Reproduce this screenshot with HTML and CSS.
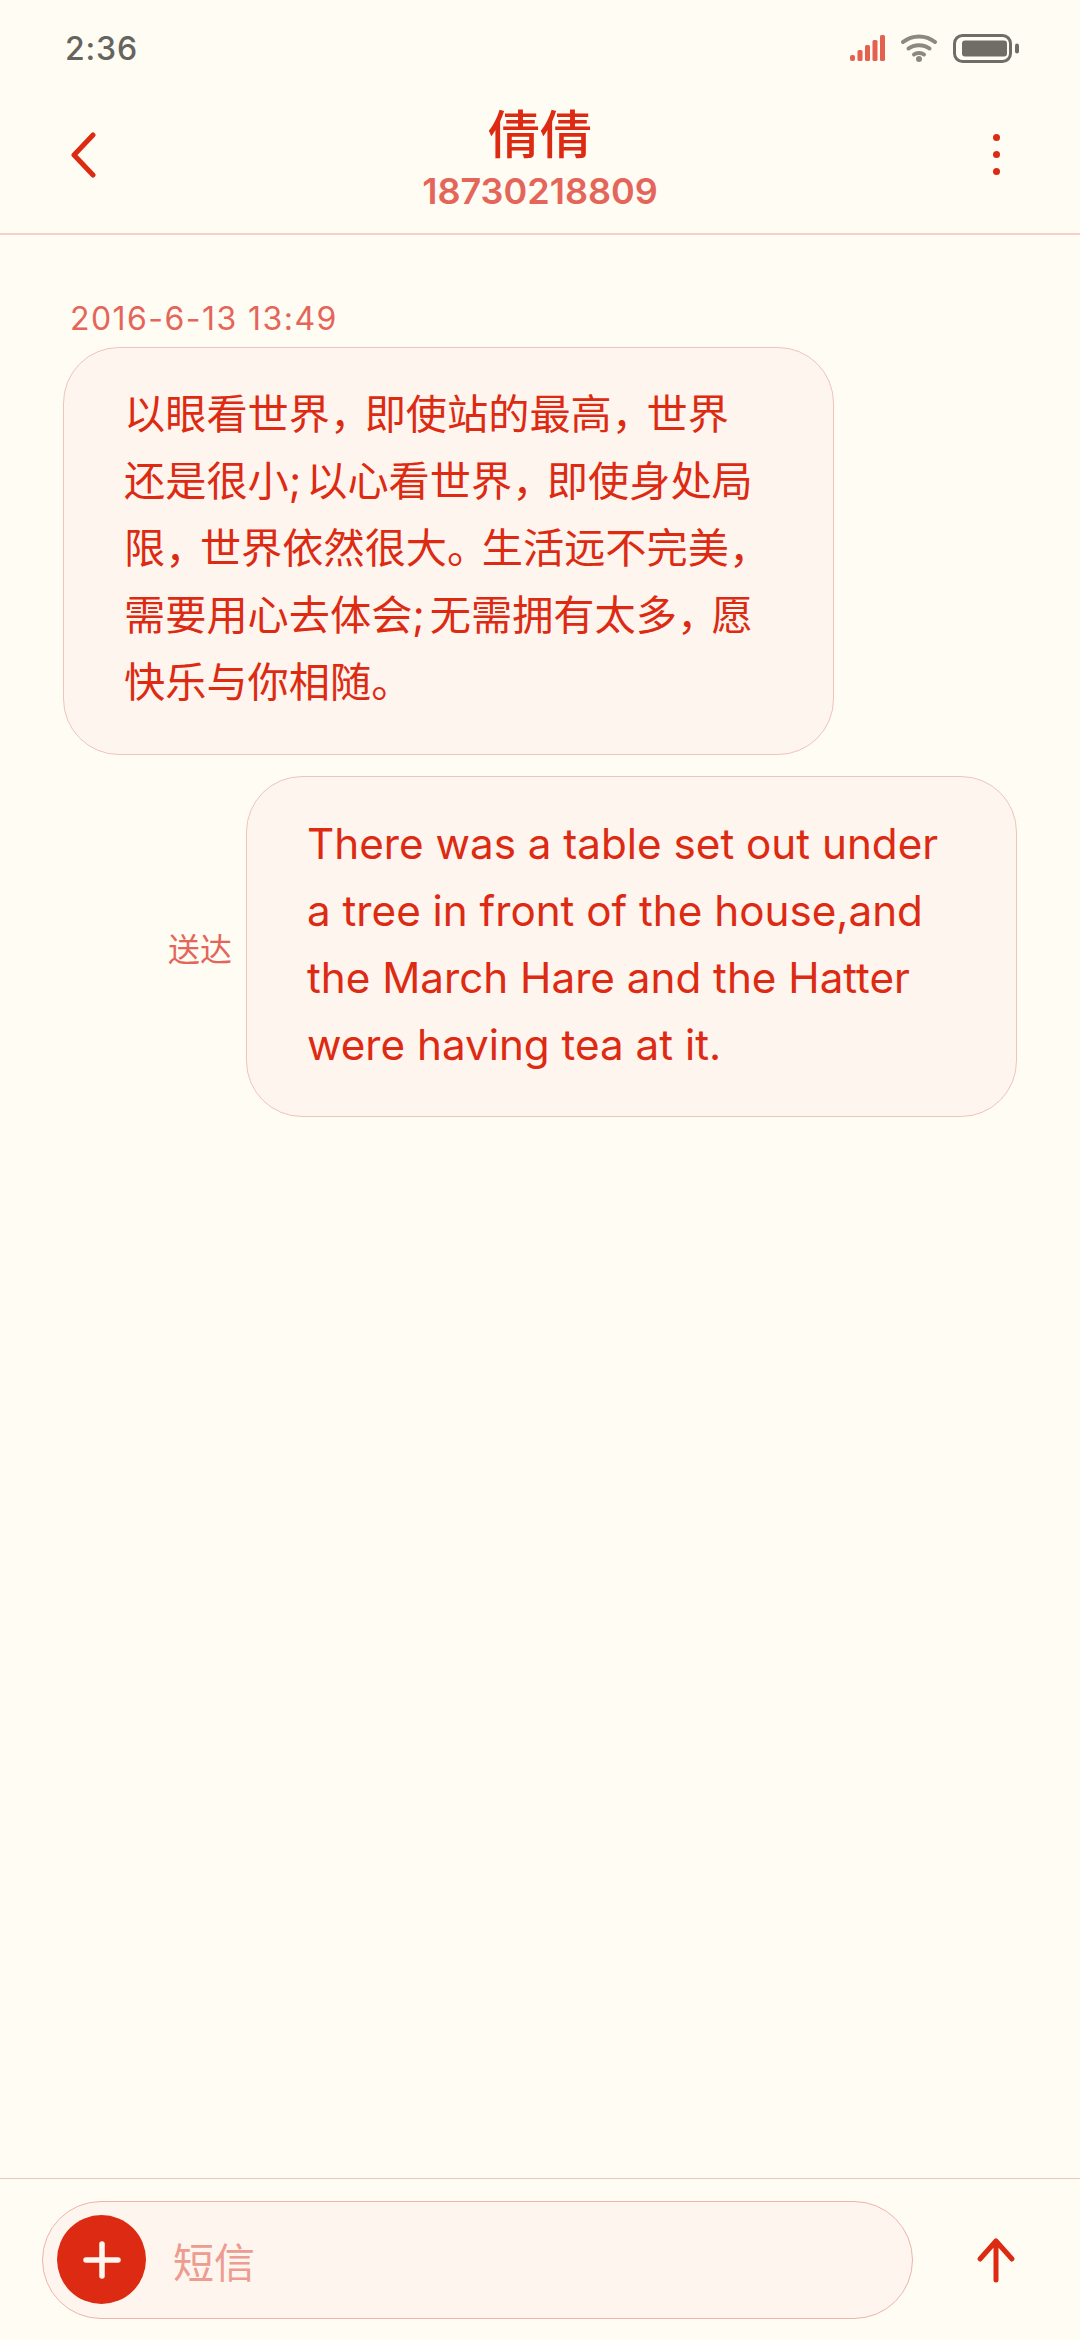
FILE: index.html
```html
<!DOCTYPE html>
<html lang="zh-CN">

<head>
    <meta charset="UTF-8">
    <meta name="viewport" content="width=device-width, initial-scale=1.0">
    <title>倩倩</title>
    <link rel="stylesheet" href="styles.css">
</head>

<body>
    <div class="screen">
        <div class="status-bar">
            <span class="time">2:36</span>
            <div class="status-icons">
                <svg class="icon-signal" width="35" height="26" viewBox="0 0 35 26">
                    <g fill="#e4604f">
                        <rect x="0" y="20" width="5" height="6" rx="2" />
                        <rect x="7.500" y="15" width="5" height="11" rx="1.500" />
                        <rect x="15" y="10" width="5" height="16" rx="1.500" />
                        <rect x="22.500" y="5" width="5" height="21" rx="1.500" />
                        <rect x="30" y="0" width="5" height="26" rx="1.500" />
                    </g>
                </svg>
                <svg class="icon-wifi" width="36" height="28" viewBox="0 0 36 28">
                    <g fill="none" stroke="#8a8a80" stroke-width="4" stroke-linecap="round">
                        <path d="M2 8C11 0.500 25 0.500 34 8" />
                        <path d="M7.500 14.500C13 10 23 10 28.500 14.500" />
                        <path d="M13 20.500C15.500 18.500 20.500 18.500 23 20.500" />
                    </g>
                    <circle cx="18" cy="25" r="3" fill="#8a8a80" />
                </svg>
                <svg class="icon-battery" width="66" height="29" viewBox="0 0 66 29">
                    <rect x="1.500" y="1.500" width="56" height="26" rx="8" fill="none" stroke="#6f6d66" stroke-width="3" />
                    <rect x="9" y="6.500" width="45" height="16" rx="3" fill="#6f6d66" />
                    <rect x="62" y="9.500" width="4" height="10" rx="2" fill="#6f6d66" />
                </svg>
            </div>
        </div>

        <header class="title-bar">
            <svg class="icon-back" width="26" height="46" viewBox="0 0 26 46">
                <path d="M23 3L4 23l19 20" fill="none" stroke="#dd2a12" stroke-width="5" stroke-linecap="round" stroke-linejoin="round" />
            </svg>
            <div class="title-text">
                <div class="contact-name">倩倩</div>
                <div class="contact-number">18730218809</div>
            </div>
            <div class="more">
                <span class="dot"></span>
                <span class="dot"></span>
                <span class="dot"></span>
            </div>
        </header>

        <main class="messages">
            <div class="timestamp">2016-6-13 13:49</div>
            <div class="bubble bubble-zh">以眼看世界<span class="punct">，</span>即使站的最高<span class="punct">，</span>世界<br>还是很小<span class="semi">;</span>以心看世界<span class="punct">，</span>即使身处局<br>限<span class="punct">，</span>世界依然很大<span class="punct">。</span>生活远不完美<span class="punct">，</span><br>需要用心去体会<span class="semi">;</span>无需拥有太多<span class="punct">，</span>愿<br>快乐与你相随<span class="punct">。</span></div>
            <div class="sent-row">
                <span class="delivered">送达</span>
                <div class="bubble bubble-en">There was a table set out under<br>a tree in front of the house,and<br>the March Hare and the Hatter<br>were having tea at it.</div>
            </div>
        </main>

        <footer class="composer">
            <div class="input-pill">
                <div class="add-btn">
                    <svg width="40" height="40" viewBox="0 0 40 40">
                        <path d="M20 4v32M4 20h32" stroke="#fff6f0" stroke-width="5.500" stroke-linecap="round" />
                    </svg>
                </div>
                <span class="placeholder">短信</span>
            </div>
            <svg class="icon-send" width="40" height="46" viewBox="0 0 40 46">
                <path d="M20 43V4M4 22L20 4l16 18" fill="none" stroke="#dd2a12" stroke-width="5" stroke-linecap="round" stroke-linejoin="round" />
            </svg>
        </footer>
    </div>
</body>

</html>
```

FILE: styles.css
```css
* {
    box-sizing: border-box;
}

body {
    margin: 0;
    background-color: #fffcf3;
    font-family: Inter, "Noto Sans CJK SC", sans-serif;
    color: #dd2a12;
}

.screen {
    display: flex;
    flex-direction: column;
    height: 2340px;
}

.status-bar {
    display: flex;
    align-items: center;
    justify-content: space-between;
    height: 96px;
    padding: 0 61px 0 65px;
}

.time {
    font-size: 32px;
    font-weight: 500;
    letter-spacing: 0.8px;
    color: #66645e;
}

.status-icons {
    display: flex;
    align-items: center;
    gap: 16px;
}

.title-bar {
    display: grid;
    grid-template-columns: 1fr auto 1fr;
    align-items: center;
    height: 139px;
    padding: 0 70px 20px;
    border-bottom: 2px solid #f6cfc8;
}

.title-text {
    margin-top: 6px;
    text-align: center;
}

.contact-name {
    font-size: 52px;
    font-weight: 500;
    line-height: 66px;
}

.contact-number {
    font-size: 36px;
    font-weight: 600;
    line-height: 44px;
    color: #e4665a;
}

.more {
    display: flex;
    flex-direction: column;
    gap: 10px;
    justify-self: end;
    margin-right: 10px;
}

.dot {
    width: 7px;
    height: 7px;
    border-radius: 50%;
    background-color: #dd2a12;
}

.messages {
    flex: 1;
    display: flex;
    flex-direction: column;
    padding: 64px 63px 0;
}

.timestamp {
    margin: 0 0 9px 7px;
    font-size: 32px;
    letter-spacing: 1.45px;
    line-height: 39px;
    color: #e4665a;
}

.bubble {
    width: 771px;
    padding: 33px 60px 38px;
    border: 1px solid #f0c4bc;
    border-radius: 56px;
    background-color: #fef5ee;
    line-height: 67px;
    white-space: nowrap;
}

.bubble-zh {
    font-size: 41.2px;
}

.bubble-en {
    font-size: 42.2px;
}

/* the reference sets cjk punctuation a little narrower than a full em */
.punct {
    letter-spacing: -6.5px;
}

.semi {
    letter-spacing: 5px;
}

.sent-row {
    display: flex;
    align-items: center;
    justify-content: flex-end;
    gap: 14px;
    margin: 21px 0 0;
    width: 954px;
}

.delivered {
    font-size: 32px;
    color: #e4665a;
}

.composer {
    display: flex;
    align-items: center;
    height: 162px;
    padding: 0 0 0 42px;
    border-top: 1px solid #f0c4bc;
}

.input-pill {
    display: flex;
    align-items: center;
    width: 871px;
    height: 118px;
    padding-left: 14px;
    border: 1px solid #eeb4aa;
    border-radius: 59px;
    background-color: #fef5ee;
}

.add-btn {
    display: flex;
    align-items: center;
    justify-content: center;
    width: 89px;
    height: 89px;
    border-radius: 50%;
    background-color: #dd2a12;
}

.placeholder {
    margin-left: 27px;
    font-size: 41px;
    color: #ec9c90;
}

.icon-send {
    margin-left: 63px;
}
```
